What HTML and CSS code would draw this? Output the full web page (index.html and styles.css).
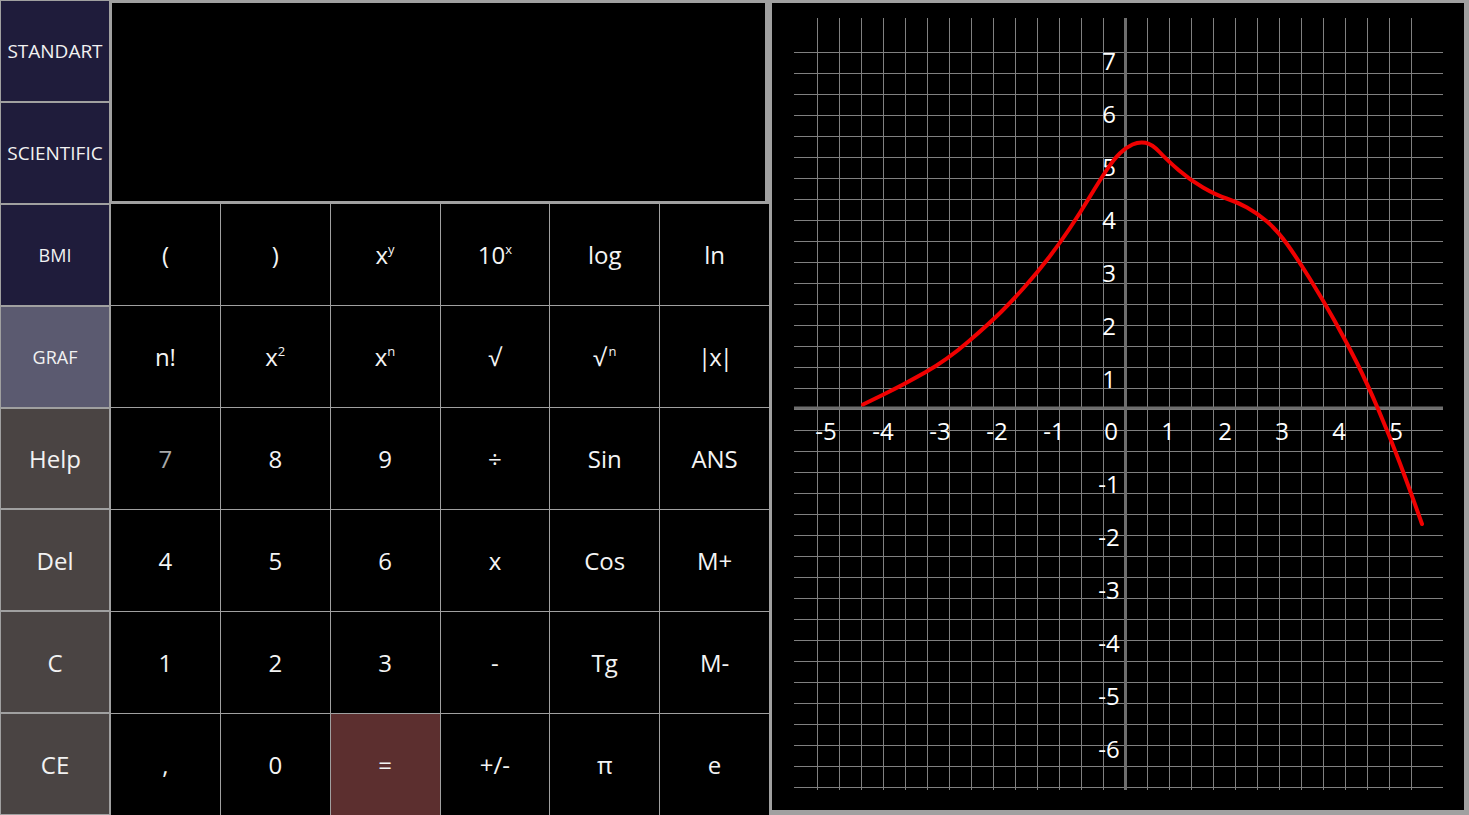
FILE: index.html
```html
<!DOCTYPE html>
<html lang="en">
<head>
<meta charset="utf-8">
<title>Calculator</title>
<link rel="stylesheet" href="styles.css">
</head>
<body>
<div class="app">
  <nav class="nav">
    <div class="navbtn mode small">STANDART</div>
    <div class="navbtn mode small">SCIENTIFIC</div>
    <div class="navbtn mode smaller">BMI</div>
    <div class="navbtn graf smaller">GRAF</div>
    <div class="navbtn tool">Help</div>
    <div class="navbtn tool">Del</div>
    <div class="navbtn tool">C</div>
    <div class="navbtn tool">CE</div>
  </nav>
  <main class="main">
    <div class="display"></div>
    <div class="keys">
      <div class="key">(</div>
      <div class="key">)</div>
      <div class="key"><span>x<sup>y</sup></span></div>
      <div class="key"><span>10<sup>x</sup></span></div>
      <div class="key">log</div>
      <div class="key">ln</div>

      <div class="key">n!</div>
      <div class="key"><span>x<sup>2</sup></span></div>
      <div class="key"><span>x<sup>n</sup></span></div>
      <div class="key">√</div>
      <div class="key"><span>√<sup>&#8201;n</sup></span></div>
      <div class="key tight">|x|</div>

      <div class="key dim">7</div>
      <div class="key">8</div>
      <div class="key">9</div>
      <div class="key">÷</div>
      <div class="key">Sin</div>
      <div class="key">ANS</div>

      <div class="key">4</div>
      <div class="key">5</div>
      <div class="key">6</div>
      <div class="key">x</div>
      <div class="key">Cos</div>
      <div class="key">M+</div>

      <div class="key">1</div>
      <div class="key">2</div>
      <div class="key">3</div>
      <div class="key">-</div>
      <div class="key">Tg</div>
      <div class="key">M-</div>

      <div class="key">,</div>
      <div class="key">0</div>
      <div class="key equals">=</div>
      <div class="key">+/-</div>
      <div class="key">π</div>
      <div class="key">e</div>
    </div>
  </main>
  <section class="graph">
    <svg class="plot" viewBox="772 3 692 807" width="692" height="807">
      <defs>
        <pattern id="vgrid" x="817" y="0" width="22" height="10" patternUnits="userSpaceOnUse">
          <rect x="0" y="0" width="1" height="10" fill="#808080"/>
        </pattern>
        <pattern id="hgrid" x="0" y="52" width="10" height="21" patternUnits="userSpaceOnUse">
          <rect x="0" y="0" width="10" height="1" fill="#808080"/>
        </pattern>
      </defs>
      <rect x="817" y="18" width="595" height="772" fill="url(#vgrid)"/>
      <rect x="794" y="52" width="649" height="736" fill="url(#hgrid)"/>
      <rect x="794" y="406.5" width="649" height="3" fill="#6e6e6e"/>
      <rect x="1124" y="18" width="3" height="772" fill="#6e6e6e"/>
      <g class="labels" text-anchor="middle">
        <text x="826" y="440">-5</text>
        <text x="883" y="440">-4</text>
        <text x="940" y="440">-3</text>
        <text x="997" y="440">-2</text>
        <text x="1054" y="440">-1</text>
        <text x="1111" y="440">0</text>
        <text x="1168" y="440">1</text>
        <text x="1225" y="440">2</text>
        <text x="1282" y="440">3</text>
        <text x="1339" y="440">4</text>
        <text x="1396" y="440">5</text>
        <text x="1109" y="70">7</text>
        <text x="1109" y="123">6</text>
        <text x="1109" y="176">5</text>
        <text x="1109" y="228.5">4</text>
        <text x="1109" y="281.5">3</text>
        <text x="1109" y="334.5">2</text>
        <text x="1109" y="387.5">1</text>
        <text x="1109" y="493">-1</text>
        <text x="1109" y="546">-2</text>
        <text x="1109" y="599">-3</text>
        <text x="1109" y="652">-4</text>
        <text x="1109" y="705">-5</text>
        <text x="1109" y="758">-6</text>
      </g>
      <path class="curve" d="M863 404.5 L883 394.75 Q903 385 925 372.5 Q947 360 968.5 341.5 Q990 323 1001 312 Q1012 301 1024.5 287 Q1037 273 1048.5 258 Q1060 243 1070 228 Q1080 213 1090 196.5 Q1100 180 1107 169.5 Q1114 159 1120 153.25 Q1126 147.5 1132.5 144.5 Q1139 141.5 1145.5 142.75 Q1152 144 1159.5 152 Q1167 160 1178.5 170 Q1190 180 1203 187.5 Q1216 195 1226.5 198.5 Q1237 202 1247 207.5 Q1257 213 1267 221.5 Q1277 230 1287 244 Q1297 258 1310 279 Q1323 300 1335 321.5 Q1347 343 1357 363 Q1367 383 1378.5 410 Q1390 437 1400 463.5 Q1410 490 1422 524"/>
    </svg>
  </section>
</div>
</body>
</html>
```

FILE: styles.css
```css
* {
  box-sizing: border-box;
}

html, body {
  margin: 0;
  padding: 0;
}

body {
  width: 1469px;
  height: 815px;
  overflow: hidden;
  background: #a0a0a0;
  font-family: "Open Sans", "Noto Sans", sans-serif;
  color: #f4f4f4;
}

.app {
  display: flex;
  width: 1469px;
  height: 815px;
  background: #a0a0a0;
}

.nav {
  width: 108px;
  margin-left: 1px;
  padding: 1px 0;
  display: flex;
  flex-direction: column;
  gap: 2px;
  flex: none;
}

.navbtn {
  flex: 1;
  display: flex;
  align-items: center;
  justify-content: center;
  font-size: 24px;
  color: #f2f2f2;
}

.navbtn.small {
  font-size: 19px;
}

.navbtn.smaller {
  font-size: 18px;
}

.mode {
  background: #1f1c3b;
}

.graf {
  background: #5b5a70;
}

.tool {
  background: #4a4443;
}

.main {
  width: 658px;
  margin-left: 2px;
  display: flex;
  flex-direction: column;
  flex: none;
}

.display {
  height: 198px;
  margin: 3px 4px 3px 1px;
  background: #000;
  flex: none;
}

.keys {
  flex: 1;
  display: grid;
  grid-template-columns: repeat(6, 1fr);
  grid-template-rows: repeat(6, 1fr);
  gap: 1px;
  background: #a0a0a0;
}

.key {
  background: #000;
  display: flex;
  align-items: center;
  justify-content: center;
  font-size: 24px;
  color: #f4f4f4;
}

.key sup {
  font-size: 13px;
  vertical-align: 10px;
  line-height: 0;
}

.key.tight {
  letter-spacing: -2px;
}

.key.dim {
  color: #a8a8a8;
}

.key.equals {
  background: #5c2f2f;
}

.graph {
  width: 692px;
  height: 807px;
  margin: 3px 5px 5px 3px;
  background: #000;
  flex: none;
}

.plot {
  display: block;
}

.labels text {
  font-family: "Open Sans", "Noto Sans", sans-serif;
  font-size: 24px;
  fill: #ffffff;
}

.curve {
  fill: none;
  stroke: #f00000;
  stroke-width: 4;
  stroke-linecap: round;
  stroke-linejoin: round;
}
```
